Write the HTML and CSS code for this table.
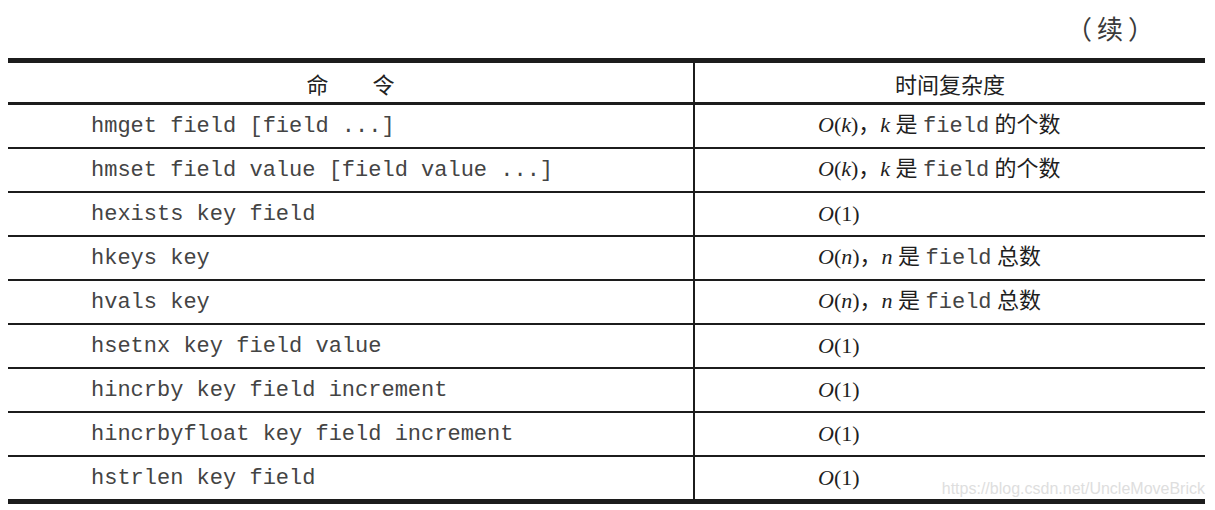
FILE: index.html
```html
<!DOCTYPE html>
<html lang="zh-CN">
<head>
<meta charset="utf-8">
<title>Hash 命令时间复杂度（续）</title>
<link rel="stylesheet" href="styles.css">
</head>
<body>
<div class="page">
  <div class="caption"><span class="cont">（续）</span></div>
  <div class="wrap">
    <div class="grid">
      <div class="cell head left">命　　令</div>
      <div class="cell head right center">时间复杂度</div>

      <div class="cell left"><code>hmget field [field ...]</code></div>
      <div class="cell right"><span class="cx"><i>O</i>(<i>k</i>)，<i>k</i> 是 <code>field</code> 的个数</span></div>

      <div class="cell left"><code>hmset field value [field value ...]</code></div>
      <div class="cell right"><span class="cx"><i>O</i>(<i>k</i>)，<i>k</i> 是 <code>field</code> 的个数</span></div>

      <div class="cell left"><code>hexists key field</code></div>
      <div class="cell right"><span class="cx"><i>O</i>(1)</span></div>

      <div class="cell left"><code>hkeys key</code></div>
      <div class="cell right"><span class="cx"><i>O</i>(<i>n</i>)，<i>n</i> 是 <code>field</code> 总数</span></div>

      <div class="cell left"><code>hvals key</code></div>
      <div class="cell right"><span class="cx"><i>O</i>(<i>n</i>)，<i>n</i> 是 <code>field</code> 总数</span></div>

      <div class="cell left"><code>hsetnx key field value</code></div>
      <div class="cell right"><span class="cx"><i>O</i>(1)</span></div>

      <div class="cell left"><code>hincrby key field increment</code></div>
      <div class="cell right"><span class="cx"><i>O</i>(1)</span></div>

      <div class="cell left"><code>hincrbyfloat key field increment</code></div>
      <div class="cell right"><span class="cx"><i>O</i>(1)</span></div>

      <div class="cell left last"><code>hstrlen key field</code></div>
      <div class="cell right last"><span class="cx"><i>O</i>(1)</span></div>
    </div>
    <div class="watermark">https://blog.csdn.net/UncleMoveBrick</div>
  </div>
</div>
</body>
</html>
```

FILE: styles.css
```css
* { box-sizing: border-box; }

html, body {
  margin: 0;
  padding: 0;
  background: #ffffff;
}

body {
  padding: 0 8px;
  color: #1e1e1e;
  font-family: "Liberation Serif", "Noto Sans CJK SC", serif;
}

.page {
  width: 1197px;
}

.caption {
  height: 58px;
  display: flex;
  justify-content: flex-end;
  align-items: center;
  padding-right: 46px;
  padding-bottom: 2px;
}

.cont {
  font-family: "Noto Sans CJK SC", sans-serif;
  font-size: 26px;
  letter-spacing: 5px;
  color: #3a3a3a;
  line-height: 1;
}

.wrap {
  position: relative;
}

.grid {
  display: grid;
  grid-template-columns: 687px 1fr;
  border-top: 5px solid #1c1c1c;
  border-bottom: 5px solid #1c1c1c;
}

.cell {
  height: 44px;
  border-bottom: 2px solid #1c1c1c;
  display: flex;
  align-items: center;
  font-size: 22px;
  line-height: 24px;
}

.cell.left {
  border-right: 2px solid #1c1c1c;
  padding-left: 83px;
  padding-top: 2px;
}

.cell.right {
  padding-left: 123px;
}

.cell.head {
  height: 42px;
  border-bottom-width: 3px;
  justify-content: center;
  padding-left: 0;
  padding-top: 0;
  font-family: "Noto Sans CJK SC", sans-serif;
  font-size: 22px;
  color: #222;
}

.cell.last {
  height: 42px;
  border-bottom: 0;
}

code {
  font-family: "Liberation Mono", "Courier New", monospace;
  font-size: 22px;
  line-height: 24px;
  color: #444;
  white-space: pre;
}

.cx {
  font-family: "Liberation Serif", "Noto Sans CJK SC", serif;
  font-size: 22px;
  line-height: 24px;
  white-space: pre;
  color: #1e1e1e;
}

.cx code {
  color: #444;
}

.cx i {
  font-style: italic;
}

.watermark {
  position: absolute;
  right: 0;
  bottom: 6px;
  font-family: "Liberation Sans", Arial, sans-serif;
  font-size: 16px;
  line-height: 18px;
  color: #dedede;
  white-space: nowrap;
}
```
